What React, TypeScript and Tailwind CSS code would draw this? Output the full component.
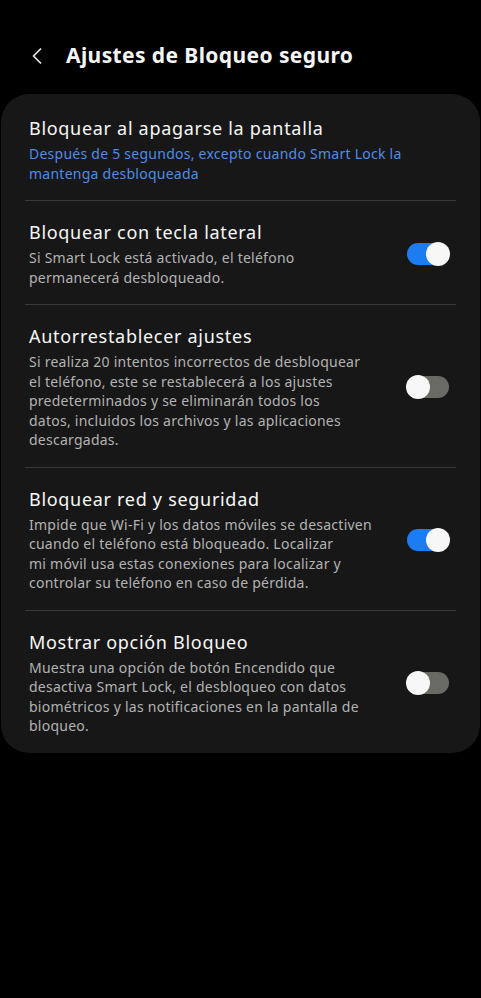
import { ChevronLeft } from 'lucide-react';

interface SettingRow {
  title: string;
  lines: string[];
  accent?: boolean;
  toggle?: boolean;
}

const rows: SettingRow[] = [
  {
    title: 'Bloquear al apagarse la pantalla',
    lines: ['Después de 5 segundos, excepto cuando Smart Lock la', 'mantenga desbloqueada'],
    accent: true,
  },
  {
    title: 'Bloquear con tecla lateral',
    lines: ['Si Smart Lock está activado, el teléfono', 'permanecerá desbloqueado.'],
    toggle: true,
  },
  {
    title: 'Autorrestablecer ajustes',
    lines: [
      'Si realiza 20 intentos incorrectos de desbloquear',
      'el teléfono, este se restablecerá a los ajustes',
      'predeterminados y se eliminarán todos los',
      'datos, incluidos los archivos y las aplicaciones',
      'descargadas.',
    ],
    toggle: false,
  },
  {
    title: 'Bloquear red y seguridad',
    lines: [
      'Impide que Wi-Fi y los datos móviles se desactiven',
      'cuando el teléfono está bloqueado. Localizar',
      'mi móvil usa estas conexiones para localizar y',
      'controlar su teléfono en caso de pérdida.',
    ],
    toggle: true,
  },
  {
    title: 'Mostrar opción Bloqueo',
    lines: [
      'Muestra una opción de botón Encendido que',
      'desactiva Smart Lock, el desbloqueo con datos',
      'biométricos y las notificaciones en la pantalla de',
      'bloqueo.',
    ],
    toggle: false,
  },
];

const Toggle = ({ on }: { on: boolean }) => (
  <div
    className={`relative w-[42px] h-[22px] rounded-full ${on ? 'bg-[#1c7cf2]' : 'bg-[#6a6a65]'}`}
  >
    <div
      className={`absolute top-[-1px] w-[24px] h-[24px] rounded-full bg-[#f7f7f7] ${
        on ? 'right-[-1px]' : 'left-[-1px]'
      }`}
    />
  </div>
);

export default function App() {
  return (
    <div
      className="min-h-[998px] w-[481px] bg-black text-[#f5f5f5]"
      style={{ fontFamily: '"Noto Sans", "Open Sans", sans-serif' }}
    >
      <header className="flex items-center h-[94px] pt-[18px] pl-[23px]">
        <ChevronLeft className="w-[28px] h-[28px] text-[#e8e8e8]" strokeWidth={1.5} />
        <h1 className="ml-[15px] text-[21px] font-bold tracking-[0.4px]">Ajustes de Bloqueo seguro</h1>
      </header>

      <div className="mx-px rounded-[28px] bg-[#171717] pt-[3px]">
        {rows.map((row, i) => (
          <div key={row.title}>
            {i > 0 && <div className="mx-[24px] h-px bg-[#383838]" />}
            <div className="flex items-center pl-[28px] pr-[31px] pt-[19px] pb-[17px]">
              <div className="flex-1">
                <div className="text-[18px] leading-[24px] tracking-[0.7px] text-[#f7f7f7]">{row.title}</div>
                <div
                  className={`mt-[4px] text-[14px] leading-[19.5px] tracking-[0.25px] ${
                    row.accent ? 'text-[#4f8ce6]' : 'text-[#b3b3b3]'
                  }`}
                >
                  {row.lines.map((line) => (
                    <div key={line} className="whitespace-nowrap">
                      {line}
                    </div>
                  ))}
                </div>
              </div>
              {row.toggle !== undefined && <Toggle on={row.toggle} />}
            </div>
          </div>
        ))}
      </div>
    </div>
  );
}
